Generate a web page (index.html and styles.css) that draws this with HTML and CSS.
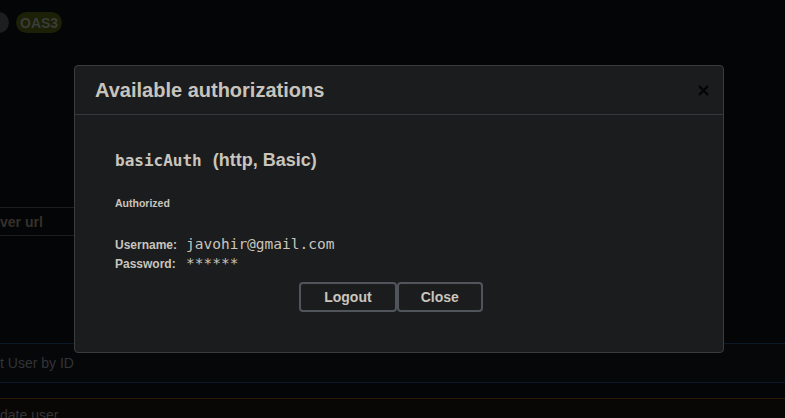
FILE: index.html
```html
<!DOCTYPE html>
<html>
<head>
<meta charset="utf-8">
<link rel="stylesheet" href="styles.css">
</head>
<body>
<div class="page">
  <div class="info">
    <span class="badge badge-version">1.0</span>
    <span class="badge badge-oas">OAS3</span>
  </div>
  <div class="servers">
    <div class="server-input">ver url</div>
  </div>
  <div class="opblock op-get">
    <div class="op-summary">t User by ID</div>
  </div>
  <div class="opblock op-put">
    <div class="op-summary">date user</div>
  </div>
</div>

<div class="modal">
  <div class="modal-header">
    <h3 class="modal-title">Available authorizations</h3>
    <button class="close-btn" aria-label="close">
      <svg width="11" height="11" viewBox="0 0 20 20"><path d="M3 3 L17 17 M17 3 L3 17" stroke="#050505" stroke-width="4" stroke-linecap="round"/></svg>
    </button>
  </div>
  <div class="modal-content">
    <div class="auth-container">
      <h4 class="auth-name"><code class="scheme">basicAuth</code><span class="scheme-type">(http, Basic)</span></h4>
      <h6 class="auth-status">Authorized</h6>
      <div class="cred-row"><span class="cred-label">Username:</span><code class="cred-value">javohir@gmail.com</code></div>
      <div class="cred-row"><span class="cred-label">Password:</span><code class="cred-value">******</code></div>
      <div class="btn-wrapper">
        <button class="btn btn-logout">Logout</button>
        <button class="btn btn-close">Close</button>
      </div>
    </div>
  </div>
</div>
</body>
</html>
```
FILE: styles.css
```css
html, body {
  margin: 0;
  padding: 0;
  width: 785px;
  height: 418px;
  overflow: hidden;
  background: #040506;
  font-family: "Liberation Sans", Arial, sans-serif;
}

.page {
  display: flex;
  flex-direction: column;
}

.info {
  display: flex;
  align-items: center;
  gap: 7px;
  padding-top: 12px;
  margin-left: -34px;
  height: 21px;
}

.badge {
  display: inline-flex;
  align-items: center;
  height: 21px;
  padding: 0 4px;
  border-radius: 11px;
  font-size: 14px;
  font-weight: bold;
  line-height: 1;
}

.badge-version {
  background: #1d1e20;
  color: #3a3b3d;
  width: 35px;
}

.badge-oas {
  background: #1b2006;
  color: #3a3c38;
  padding: 0 4px;
}

.servers {
  margin-top: 174px;
  width: 74px;
}

.server-input {
  height: 27px;
  border-top: 1px solid #1c1d1f;
  border-bottom: 1px solid #1c1d1f;
  display: flex;
  align-items: center;
  color: #36312b;
  font-size: 14px;
  font-weight: bold;
  white-space: nowrap;
  overflow: hidden;
}

.opblock {
  border-top: 1px solid #0b1827;
}

.op-get {
  margin-top: 107px;
  height: 38px;
  border-bottom: 1px solid #0b1827;
  background: #050709;
}

.op-put {
  margin-top: 15px;
  border-top: 1px solid #2a1904;
  background: #090706;
  height: 19px;
  overflow: hidden;
}

.op-summary {
  display: flex;
  align-items: center;
  height: 38px;
  color: #333437;
  font-size: 14px;
  white-space: nowrap;
}

.op-put .op-summary {
  align-items: flex-end;
  height: 24px;
}

/* Modal */
.modal {
  position: absolute;
  left: 74px;
  top: 65px;
  width: 648px;
  height: 286px;
  background: #1b1c1e;
  border: 1px solid #3b3c3e;
  border-radius: 4px;
  color: #c9c5bd;
}

.modal-header {
  display: flex;
  align-items: center;
  justify-content: space-between;
  height: 48px;
  padding: 0 14px 0 20px;
  border-bottom: 1px solid #36373a;
}

.modal-title {
  margin: 0;
  font-size: 20px;
  font-weight: bold;
  color: #c8c4bc;
}

.close-btn {
  background: none;
  border: 0;
  padding: 0;
  width: 11px;
  height: 11px;
  display: flex;
  align-items: center;
  justify-content: center;
  margin-top: 1px;
}

.modal-content {
  padding: 20px;
}

.auth-container {
  padding: 0 20px;
}

.auth-name {
  margin: 15px 0 0;
  display: flex;
  align-items: baseline;
  height: 22px;
}

.scheme {
  font-family: "DejaVu Sans Mono", monospace;
  font-size: 16px;
  font-weight: bold;
  color: #c9c5bd;
  margin-right: 11px;
}

.scheme-type {
  font-size: 18px;
  font-weight: bold;
  color: #c9c5bd;
}

.auth-status {
  margin: 25px 0 0;
  font-size: 10.5px;
  font-weight: bold;
  color: #c9c5bd;
  height: 13px;
}

.cred-row {
  display: flex;
  align-items: baseline;
  height: 19px;
}

.auth-status + .cred-row {
  margin-top: 26px;
}

.cred-label {
  font-size: 12px;
  font-weight: bold;
  color: #c9c5bd;
  width: 71px;
}

.cred-value {
  font-family: "DejaVu Sans Mono", monospace;
  font-size: 14.5px;
  color: #c9c5bd;
}

.btn-wrapper {
  display: flex;
  justify-content: center;
  gap: 0;
  margin-top: 8px;
  padding-right: 16px;
}

.btn {
  height: 30px;
  margin: 0;
  padding: 0 23px;
  border: 2px solid #4f555b;
  border-radius: 4px;
  background: #1b1c1e;
  color: #c9c5bd;
  font-family: "Liberation Sans", Arial, sans-serif;
  font-size: 14px;
  font-weight: bold;
}

.btn-close {
  padding: 0 22px;
}
```
